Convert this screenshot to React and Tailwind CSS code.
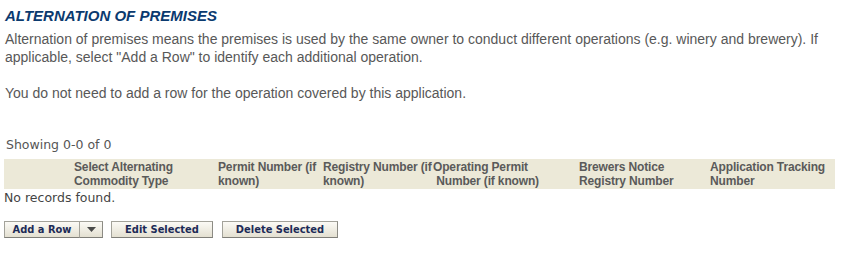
import { ChevronDown } from 'lucide-react';

// ─── Table columns ───────────────────────────────────────────────────────────

const COLUMNS = [
  { key: 'select', width: 'w-[70px]', lines: ['', ''] },
  { key: 'commodity', width: 'w-[144px]', lines: ['Select Alternating', 'Commodity Type'] },
  { key: 'permit', width: 'w-[105px]', lines: ['Permit Number (if', 'known)'] },
  { key: 'registry', width: 'w-[110px]', lines: ['Registry Number (if', 'known)'] },
  { key: 'operating', width: 'w-[146px]', lines: ['Operating Permit', '\u00a0Number (if known)'] },
  { key: 'brewers', width: 'w-[131px]', lines: ['Brewers Notice', 'Registry Number'] },
  { key: 'tracking', width: 'w-[125px]', lines: ['Application Tracking', 'Number'] },
];

const btnBase =
  'h-[17px] border border-[#a3a29a] border-b-[#7f7e78] border-r-[#8c8b84] bg-gradient-to-b from-[#fbfaf6] to-[#e4e0d1] text-[11px] font-bold leading-[15px] text-[#1d2b57] [font-family:"DejaVu_Sans_Condensed","DejaVu_Sans",sans-serif]';

function ActionButton({ label, className }) {
  return (
    <button type="button" className={`${btnBase} ${className}`}>
      {label}
    </button>
  );
}

export default function App() {
  return (
    <div className="min-h-[256px] bg-white pl-[4px] pt-[7px] [font-family:'Liberation_Sans',Arial,sans-serif]">
      {/* Section title */}
      <h2 className="pl-[1px] text-[15px] font-bold italic leading-[17px] text-[#0b3a6f]">
        ALTERNATION OF PREMISES
      </h2>

      <p className="mt-[6px] pl-[1px] pr-[4px] text-[14px] leading-[18px] text-[#585858]">
        Alternation of premises means the premises is used by the same owner to conduct different
        operations (e.g. winery and brewery). If applicable, select "Add a Row" to identify each
        additional operation.
        <br />
        <br />
        You do not need to add a row for the operation covered by this application.
      </p>

      {/* Grid */}
      <div className="mt-[35px] [font-family:'DejaVu_Sans',Verdana,sans-serif]">
        <div className="pl-[2px] text-[12.5px] leading-[15px] text-[#555555]">Showing 0-0 of 0</div>

        <div className="mt-[7px] flex w-[831px] bg-[#ece9d8] py-[1px] text-[12px] font-bold leading-[14px] tracking-[-0.15px] text-[#5a5a5a] [font-family:'Liberation_Sans',Arial,sans-serif]">
          {COLUMNS.map((col) => (
            <div key={col.key} className={`${col.width} shrink-0 whitespace-nowrap`}>
              <div className="h-[14px]">{col.lines[0]}</div>
              <div className="h-[14px]">{col.lines[1]}</div>
            </div>
          ))}
        </div>

        <div className="mt-[1px] text-[12.5px] leading-[15px] text-[#444444]">No records found.</div>
      </div>

      {/* Actions */}
      <div className="mt-[16px] flex items-start">
        <div className="flex">
          <ActionButton label="Add a Row" className="w-[76px] border-r-[#a3a29a]" />
          <button
            type="button"
            className="flex h-[17px] w-[23px] items-center justify-center border border-l-0 border-[#a3a29a] border-b-[#7f7e78] border-r-[#8c8b84] bg-gradient-to-b from-[#fbfaf6] to-[#e4e0d1]"
          >
            <svg width="9" height="5" viewBox="0 0 9 5">
              <path d="M0 0 H9 L4.5 5 Z" fill="#4a4a4a" />
            </svg>
          </button>
        </div>
        <ActionButton label="Edit Selected" className="ml-[8px] w-[102px]" />
        <ActionButton label="Delete Selected" className="ml-[9px] w-[116px]" />
      </div>
    </div>
  );
}
